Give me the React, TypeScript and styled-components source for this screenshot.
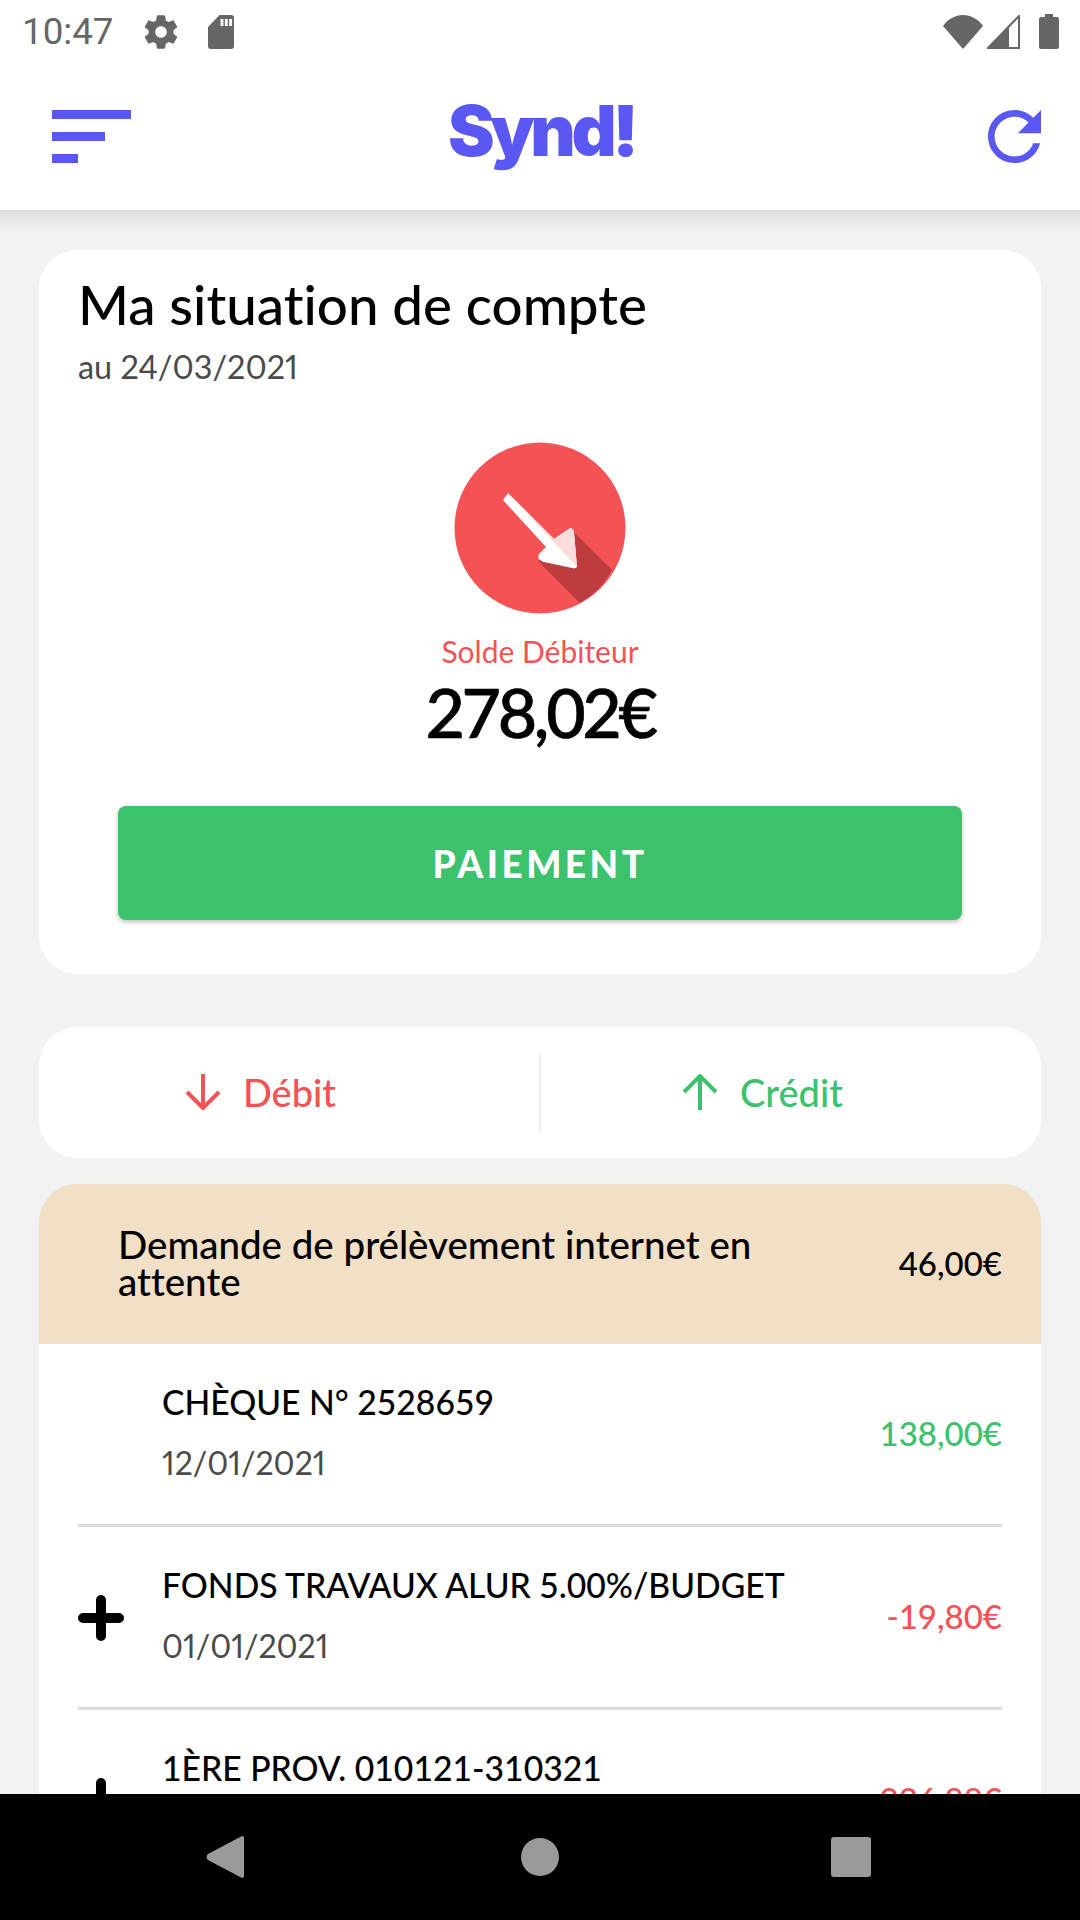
import React from 'react';
import styled, { createGlobalStyle } from 'styled-components';

const GlobalStyle = createGlobalStyle`
  html, body {
    margin: 0;
    padding: 0;
    background: #f2f2f2;
  }
  * {
    box-sizing: border-box;
  }
`;

const PURPLE = '#5b57f2';
const RED = '#f55256';
const GREEN = '#3cc16d';

const Screen = styled.div`
  width: 1080px;
  height: 1920px;
  display: flex;
  flex-direction: column;
  overflow: hidden;
  background: #f2f2f2;
  font-family: Lato, 'Open Sans', sans-serif;
  font-variant-ligatures: none;
  color: #000;
`;

const StatusBar = styled.div`
  height: 63px;
  flex: none;
  background: #fff;
  display: flex;
  align-items: center;
  padding: 0 21px 0 22px;
  color: #666;
`;

const Clock = styled.span`
  font-family: Roboto, sans-serif;
  font-size: 36.75px;
  width: 92px;
`;

const StatusLeft = styled.div`
  display: flex;
  align-items: center;
  gap: 27px;
  flex: 1;
`;

const StatusRight = styled.div`
  display: flex;
  align-items: center;
  gap: 4px;
`;

const Header = styled.header`
  height: 147px;
  flex: none;
  background: #fff;
  display: flex;
  align-items: center;
  justify-content: space-between;
  padding: 0 39px 0 52px;
  position: relative;
`;

const Logo = styled.div`
  position: absolute;
  left: 448px;
  top: 27px;
  font-family: Inter, sans-serif;
  font-weight: 900;
  font-size: 70px;
  line-height: 82px;
  letter-spacing: -4.4px;
  color: ${PURPLE};
`;

const Content = styled.main`
  flex: 1;
  min-height: 0;
  overflow: hidden;
  padding: 40px 39px 0;
  background: linear-gradient(#dedede 0, #f2f2f2 22px);
`;

const Card = styled.section`
  background: #fff;
  border-radius: 38px;
  height: 724px;
  padding: 22px 39px 0;
  margin-bottom: 53px;
  display: flex;
  flex-direction: column;
`;

const Title = styled.h1`
  margin: 0;
  font-size: 54.7px;
  line-height: 64px;
  font-weight: 500;
`;

const DateLine = styled.div`
  font-size: 32.4px;
  line-height: 40px;
  margin-top: 11px;
  color: #4a4a4a;
  font-variant-numeric: proportional-nums;
`;

const BalanceIcon = styled.svg`
  display: block;
  align-self: center;
  margin-top: 55px;
`;

const BalanceLabel = styled.div`
  text-align: center;
  color: ${RED};
  font-size: 30px;
  line-height: 36px;
  margin-top: 19px;
`;

const BalanceAmount = styled.div`
  text-align: center;
  font-size: 68px;
  line-height: 80px;
  font-weight: 500;
  letter-spacing: -3.3px;
  margin-top: 3px;
  -webkit-text-stroke: 0.7px #000;
`;

const PayButton = styled.button`
  align-self: center;
  width: 844px;
  height: 114px;
  margin-top: 54px;
  border: 0;
  border-radius: 8px;
  background: ${GREEN};
  color: #fff;
  font-family: Lato, sans-serif;
  font-size: 37px;
  font-weight: 900;
  letter-spacing: 3.5px;
  box-shadow: 0 2px 5px rgba(0, 0, 0, 0.25);
`;

const Tabs = styled.div`
  height: 131px;
  background: #fff;
  border-radius: 38px;
  display: flex;
  align-items: center;
  margin-bottom: 26px;
`;

const Tab = styled.div<{ $color: string; $divided?: boolean }>`
  flex: 1;
  height: 78px;
  padding: 0 57px 2px 0;
  display: flex;
  align-items: center;
  justify-content: center;
  gap: 22px;
  color: ${p => p.$color};
  font-size: 38px;
  font-weight: 500;
  border-right: ${p => (p.$divided ? '2px solid #efefef' : '0')};
`;

const Pending = styled.div`
  height: 160px;
  padding: 0 39px 3px 79px;
  background: #f1dfc6;
  border-radius: 38px 38px 0 0;
  display: flex;
  align-items: center;
  justify-content: space-between;
`;

const PendingText = styled.div`
  width: 680px;
  font-size: 38.5px;
  line-height: 37px;
  font-weight: 500;
`;

const PendingAmount = styled.div`
  font-size: 33px;
  font-weight: 500;
`;

const List = styled.div`
  background: #fff;
  padding: 0 39px;
`;

const Row = styled.div`
  height: 183px;
  padding-bottom: 3px;
  border-bottom: 3px solid #dedede;
  display: flex;
  align-items: center;
`;

const PlusSlot = styled.div`
  width: 84px;
  flex: none;
  display: flex;
  margin-top: 5px;
`;

const RowBody = styled.div`
  flex: 1;
`;

const RowTitle = styled.div`
  font-size: 33.7px;
  line-height: 40px;
  font-weight: 500;
`;

const RowDate = styled.div`
  font-size: 32px;
  line-height: 40px;
  margin-top: 21px;
  color: #4a4a4a;
  font-variant-numeric: proportional-nums;
`;

const RowAmount = styled.div<{ $color: string }>`
  font-size: 33px;
  color: ${p => p.$color};
  font-weight: 500;
`;

const NavBar = styled.nav`
  height: 126px;
  flex: none;
  background: #000;
  display: flex;
  align-items: center;
  justify-content: space-between;
  padding: 0 209px 0 206px;
`;

const HomeDot = styled.svg`
  margin-left: 5px;
`;

const GearIcon = () => (
  <svg width="40" height="40" viewBox="0 0 24 24" fill="#666">
    <path d="M19.43 12.98c.04-.32.07-.64.07-.98s-.03-.66-.07-.98l2.11-1.65c.19-.15.24-.42.12-.64l-2-3.46c-.12-.22-.39-.3-.61-.22l-2.49 1c-.52-.4-1.08-.73-1.69-.98l-.38-2.65C14.46 2.18 14.25 2 14 2h-4c-.25 0-.46.18-.49.42l-.38 2.65c-.61.25-1.17.59-1.69.98l-2.49-1c-.23-.09-.49 0-.61.22l-2 3.46c-.13.22-.07.49.12.64l2.11 1.65c-.04.32-.07.65-.07.98s.03.66.07.98l-2.11 1.65c-.19.15-.24.42-.12.64l2 3.46c.12.22.39.3.61.22l2.49-1c.52.4 1.08.73 1.69.98l.38 2.65c.03.24.24.42.49.42h4c.25 0 .46-.18.49-.42l.38-2.65c.61-.25 1.17-.59 1.69-.98l2.49 1c.23.09.49 0 .61-.22l2-3.46c.12-.22.07-.49-.12-.64l-2.11-1.65zM12 15.5c-1.93 0-3.5-1.57-3.5-3.5s1.57-3.5 3.5-3.5 3.5 1.57 3.5 3.5-1.57 3.5-3.5 3.5z" />
  </svg>
);

const SdIcon = () => (
  <svg width="26" height="34" viewBox="0 0 27 34" preserveAspectRatio="none" fill="#666">
    <path
      fillRule="evenodd"
      d="M12 0h12a3 3 0 0 1 3 3v28a3 3 0 0 1-3 3H3a3 3 0 0 1-3-3V12zM13 4v7h3V4zM17.5 4v7h3V4zM22 4v7h3V4z"
    />
  </svg>
);

const WifiIcon = () => (
  <svg width="40" height="34" viewBox="0 0 40 34" fill="#666">
    <path d="M20 34 0 11C5 4 12 0 20 0s15 4 20 11z" />
  </svg>
);

const SignalIcon = () => (
  <svg width="33" height="34" viewBox="0 0 33 34">
    <path d="M32 1v32H1z" fill="none" stroke="#666" strokeWidth="2" />
    <path d="M22 11 0 34h22z" fill="#666" />
  </svg>
);

const BatteryIcon = () => (
  <svg width="20" height="35" viewBox="0 0 20 35" fill="#666" style={{ marginLeft: 15 }}>
    <path d="M6 0h8v3h4a2 2 0 0 1 2 2v28a2 2 0 0 1-2 2H2a2 2 0 0 1-2-2V5a2 2 0 0 1 2-2h4z" />
  </svg>
);

const MenuIcon = () => (
  <svg width="79" height="53" viewBox="0 0 79 53" fill={PURPLE}>
    <rect x="0" y="0" width="79" height="9" />
    <rect x="0" y="22" width="53" height="9" />
    <rect x="0" y="44" width="26" height="9" />
  </svg>
);

const RefreshIcon = () => (
  <svg width="53" height="53" viewBox="4 4 16 16" fill={PURPLE}>
    <path d="M17.65 6.35C16.2 4.9 14.21 4 12 4c-4.42 0-7.99 3.58-7.99 8s3.57 8 7.99 8c3.73 0 6.84-2.55 7.73-6h-2.08c-.82 2.33-3.04 4-5.65 4-3.31 0-6-2.69-6-6s2.69-6 6-6c1.66 0 3.14.69 4.22 1.78L13 11h7V4l-2.35 2.35z" />
  </svg>
);

const DownArrow = ({ up, color }: { up?: boolean; color: string }) => (
  <svg
    width="36"
    height="36"
    viewBox="0 0 36 36"
    fill="none"
    stroke={color}
    strokeWidth="4"
    style={up ? { transform: 'rotate(180deg)' } : undefined}
  >
    <path d="M18 0v33M2 18l16 16 16-16" />
  </svg>
);

const PlusIcon = () => (
  <svg width="46" height="46" viewBox="0 0 46 46" stroke="#000" strokeWidth="10" strokeLinecap="round">
    <path d="M23 5v36M5 23h36" />
  </svg>
);

const rows = [
  { title: 'CHÈQUE N° 2528659', date: '12/01/2021', amount: '138,00€', color: GREEN, plus: false },
  { title: 'FONDS TRAVAUX ALUR 5.00%/BUDGET', date: '01/01/2021', amount: '-19,80€', color: RED, plus: true },
  { title: '1ÈRE PROV. 010121-310321', date: '01/01/2021', amount: '-226,88€', color: RED, plus: true }
];

const App = () => {
  return (
    <Screen>
      <GlobalStyle />
      <StatusBar>
        <StatusLeft>
          <Clock>10:47</Clock>
          <GearIcon />
          <SdIcon />
        </StatusLeft>
        <StatusRight>
          <WifiIcon />
          <SignalIcon />
          <BatteryIcon />
        </StatusRight>
      </StatusBar>
      <Header>
        <MenuIcon />
        <Logo>Synd!</Logo>
        <RefreshIcon />
      </Header>
      <Content>
        <Card>
          <Title>Ma situation de compte</Title>
          <DateLine>au 24/03/2021</DateLine>
          <BalanceIcon width="172" height="172" viewBox="0 0 172 172">
            <circle cx="86" cy="86" r="85.5" fill={RED} />
            <path d="M116 86 158 128A85.5 85.5 0 0 1 126 161L84 119Z" fill="#bd3c3f" />
            <path d="M54 51 59 56 100 97 116 86Q119 86 120 90L123 125Q122 127 118 126L90 120Q81 117 86 111L92 105 49 58Z" fill="#fff" />
            <path d="M54 51 101 98 116 86Q119 86 120 90L123 125Z" fill="#fddcdc" />
          </BalanceIcon>
          <BalanceLabel>Solde Débiteur</BalanceLabel>
          <BalanceAmount>278,02€</BalanceAmount>
          <PayButton>PAIEMENT</PayButton>
        </Card>
        <Tabs>
          <Tab $color={RED} $divided>
            <DownArrow color={RED} />
            Débit
          </Tab>
          <Tab $color={GREEN}>
            <DownArrow up color={GREEN} />
            Crédit
          </Tab>
        </Tabs>
        <Pending>
          <PendingText>Demande de prélèvement internet en attente</PendingText>
          <PendingAmount>46,00€</PendingAmount>
        </Pending>
        <List>
          {rows.map(({ title, date, amount, color, plus }) => (
            <Row key={title}>
              <PlusSlot>{plus && <PlusIcon />}</PlusSlot>
              <RowBody>
                <RowTitle>{title}</RowTitle>
                <RowDate>{date}</RowDate>
              </RowBody>
              <RowAmount $color={color}>{amount}</RowAmount>
            </Row>
          ))}
        </List>
      </Content>
      <NavBar>
        <svg width="38" height="42" viewBox="0 0 38 42" fill="#9a9a9a">
          <path d="M36 0a2 2 0 0 1 2 2v38a2 2 0 0 1-2 2L2 24a4 4 0 0 1 0-6z" />
        </svg>
        <HomeDot width="38" height="38" viewBox="0 0 38 38" fill="#9a9a9a">
          <circle cx="19" cy="19" r="19" />
        </HomeDot>
        <svg width="40" height="40" viewBox="0 0 40 40" fill="#9a9a9a">
          <rect width="40" height="40" rx="3" />
        </svg>
      </NavBar>
    </Screen>
  );
};

export default App;
